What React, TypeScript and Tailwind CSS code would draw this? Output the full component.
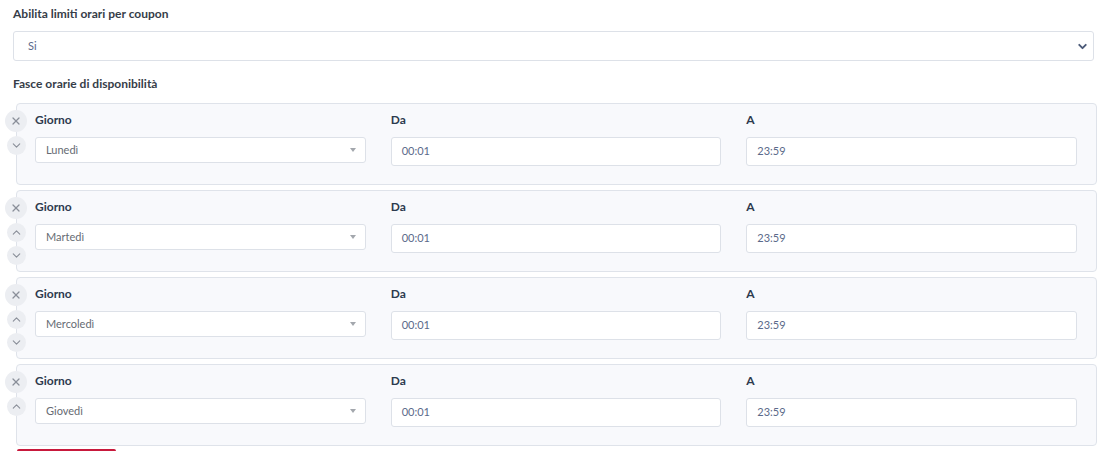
import { X, ChevronUp, ChevronDown } from "lucide-react";

const slots = [
  { day: "Lunedì", from: "00:01", to: "23:59" },
  { day: "Martedì", from: "00:01", to: "23:59" },
  { day: "Mercoledì", from: "00:01", to: "23:59" },
  { day: "Giovedì", from: "00:01", to: "23:59" },
];

function RoundButton({ children, big }: { children: React.ReactNode; big?: boolean }) {
  return (
    <div
      className={`flex items-center justify-center rounded-full bg-[#eceef2] text-[#8a8f99] ${
        big ? "h-[22px] w-[22px]" : "h-[19px] w-[19px]"
      }`}
    >
      {children}
    </div>
  );
}

export default function App() {
  return (
    <div
      className="min-h-screen w-full bg-white pl-[13px] pr-[12px] pt-[6px]"
      style={{ fontFamily: "Lato, 'Noto Sans', sans-serif" }}
    >
      <p className="text-[12px] font-bold leading-[16px] text-[#363d48]">
        Abilita limiti orari per coupon
      </p>
      <div className="mt-[9px] flex h-[30px] items-center justify-between rounded-[3px] border border-[#dde1e8] bg-white pl-[14px] pr-[4px]">
        <span className="text-[11px] text-[#5b6a8a]">Si</span>
        <ChevronDown size={13} strokeWidth={3.5} className="text-[#4b5a78]" />
      </div>

      <p className="mt-[15px] text-[12px] font-bold leading-[16px] text-[#363d48]">
        Fasce orarie di disponibilità
      </p>

      <div className="ml-[3px] mr-[-3px] mt-[11px] flex flex-col gap-[5px]">
        {slots.map((s, i) => (
          <div
            key={s.day}
            className="relative rounded-[4px] border border-[#dfe3ea] bg-[#f8f9fc]"
          >
            {/* row controls */}
            <div className="absolute left-[-12px] top-[6px] flex flex-col items-center gap-[4px]">
              <RoundButton big>
                <X size={12} strokeWidth={2.5} />
              </RoundButton>
              {i > 0 && (
                <RoundButton>
                  <ChevronUp size={13} strokeWidth={2} />
                </RoundButton>
              )}
              {i < slots.length - 1 && (
                <RoundButton>
                  <ChevronDown size={13} strokeWidth={2} />
                </RoundButton>
              )}
            </div>

            <div className="grid grid-cols-3 gap-[25px] pb-[18px] pl-[18px] pr-[19px] pt-[8px]">
              <div>
                <p className="text-[12px] font-bold leading-[16px] text-[#2d3a4e]">Giorno</p>
                <div className="mt-[9px] flex h-[26px] items-center justify-between rounded-[3px] border border-[#dde1e8] bg-white pl-[10px] pr-[9px]">
                  <span className="text-[11px] text-[#666b73]">{s.day}</span>
                  <span className="h-0 w-0 border-x-[3.5px] border-t-[4px] border-x-transparent border-t-[#a3a7ad]" />
                </div>
              </div>
              <div>
                <p className="text-[12px] font-bold leading-[16px] text-[#2d3a4e]">Da</p>
                <div className="mt-[9px] flex h-[29px] items-center rounded-[3px] border border-[#dde1e8] bg-white pl-[10px]">
                  <span className="text-[11px] text-[#5b6a8a]">{s.from}</span>
                </div>
              </div>
              <div>
                <p className="text-[12px] font-bold leading-[16px] text-[#2d3a4e]">A</p>
                <div className="mt-[9px] flex h-[29px] items-center rounded-[3px] border border-[#dde1e8] bg-white pl-[10px]">
                  <span className="text-[11px] text-[#5b6a8a]">{s.to}</span>
                </div>
              </div>
            </div>
          </div>
        ))}
      </div>

      <div className="ml-[4px] mt-[3px] h-[6px] w-[99px] rounded-t-[2px] border-t-2 border-[#c8193c]" />
    </div>
  );
}
